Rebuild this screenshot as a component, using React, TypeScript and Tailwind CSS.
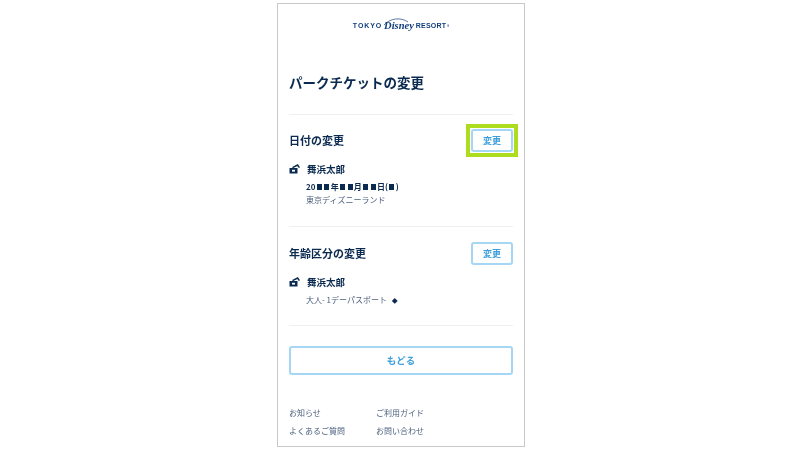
const jp = "font-['Noto_Sans_CJK_JP','Noto_Sans',sans-serif]";

function Mask() {
  return <span className="inline-block w-[5px] h-[6px] mx-[1.3px] bg-[#0b2a50]" />;
}

function TicketIcon() {
  return (
    <svg width="11" height="10" viewBox="0 0 11 10" className="shrink-0">
      <path d="M0.5 4h8v5.5h-8z" fill="#0b2a50" />
      <path d="M3 5.8h3v1.8H3z" fill="#fff" />
      <path d="M3.5 3.6 8.6 1l1.8 2.6" fill="none" stroke="#0b2a50" strokeWidth="1.5" />
    </svg>
  );
}

function ChangeButton() {
  return (
    <button className="w-[42px] h-[23px] rounded-[3px] border-2 border-[#a5d6f3] bg-white text-[9px] font-bold text-[#3f9fdc] flex items-center justify-center">
      変更
    </button>
  );
}

function Logo() {
  return (
    <div className="flex items-center justify-center h-[14px] gap-[2px] text-[#123f7c]">
      <span className="font-['Liberation_Sans',sans-serif] font-bold text-[7px] tracking-[0.9px]">TOKYO</span>
      <span className="font-['Liberation_Serif',serif] italic font-bold text-[10.5px] leading-none relative">
        Disney
        <svg width="26" height="9" viewBox="0 0 26 9" className="absolute -left-[1px] -top-[4px]">
          <path d="M1 8C7 1 18 0 25 5" fill="none" stroke="#123f7c" strokeWidth="0.7" />
        </svg>
      </span>
      <span className="font-['Liberation_Sans',sans-serif] font-bold text-[7px] tracking-[0.2px]">RESORT</span>
      <span className="text-[4px] -ml-[1px]">®</span>
    </div>
  );
}

export default function App() {
  return (
    <div className={`w-[800px] h-[450px] bg-white pt-[3px] overflow-hidden ${jp}`}>
      <div className="ml-[277px] w-[248px] h-[444px] border border-[#c9c9c9] px-[11px] pt-[15px] text-[#0b2a50] blur-[0.3px]">
        <Logo />

        <h1 className="mt-[39px] text-[13.5px] leading-[20px] font-bold">パークチケットの変更</h1>

        <div className="mt-[22px] border-t border-[#f0f0f0]" />

        {/* Date section */}
        <section className="h-[112px] border-b border-[#f0f0f0] pt-[14px]">
          <div className="flex items-center justify-between">
            <h2 className="text-[11px] font-bold">日付の変更</h2>
            <div className="outline-4 outline-offset-[1px] outline-[#aedc1e]">
              <ChangeButton />
            </div>
          </div>
          <div className="mt-[10px] flex items-center gap-[7px]">
            <TicketIcon />
            <span className="text-[9.5px] font-bold leading-[14px]">舞浜太郎</span>
          </div>
          <p className="mt-[5px] ml-[17px] text-[8px] font-bold leading-[12px] flex items-center">
            20<Mask /><Mask />年<Mask /><Mask />月<Mask /><Mask />日(<Mask />)
          </p>
          <p className="ml-[17px] text-[8px] leading-[14px] text-[#4a5f7c]">東京ディズニーランド</p>
        </section>

        {/* Age section */}
        <section className="h-[99px] border-b border-[#f0f0f0] pt-[15px]">
          <div className="flex items-center justify-between">
            <h2 className="text-[11px] font-bold">年齢区分の変更</h2>
            <ChangeButton />
          </div>
          <div className="mt-[10px] flex items-center gap-[7px]">
            <TicketIcon />
            <span className="text-[9.5px] font-bold leading-[14px]">舞浜太郎</span>
          </div>
          <p className="mt-[4px] ml-[17px] text-[8px] leading-[14px] text-[#4a5f7c]">
            大人- 1デーパスポート <span className="ml-[3px] text-[#0b2a50] text-[6px]">◆</span>
          </p>
        </section>

        <button className="mt-[20px] w-full h-[29px] rounded-[3px] border-2 border-[#a5d6f3] bg-white text-[9.5px] font-bold text-[#3f9fdc]">
          もどる
        </button>

        <div className="mt-[31px] grid grid-cols-[87px_1fr] gap-y-[4px] text-[8px] leading-[14px] text-[#4a5f7c]">
          <span>お知らせ</span>
          <span>ご利用ガイド</span>
          <span>よくあるご質問</span>
          <span>お問い合わせ</span>
        </div>
      </div>
    </div>
  );
}
